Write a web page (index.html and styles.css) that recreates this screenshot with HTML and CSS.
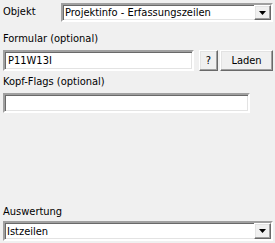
FILE: index.html
```html
<!DOCTYPE html>
<html lang="de">
<head>
  <meta charset="UTF-8" />
  <title>Auswertung</title>
  <link rel="stylesheet" href="styles.css">
</head>
<body>
  <div class="panel">
    <!-- Objekt -->
    <div class="row">
      <span class="row-label">Objekt</span>
      <div class="combo combo-top">
        <span class="combo-text">Projektinfo - Erfassungszeilen</span>
        <div class="combo-btn">
          <svg width="7" height="4" viewBox="0 0 7 4"><path d="M0 0H7L3.5 4Z" fill="#000"/></svg>
        </div>
      </div>
    </div>

    <!-- Formular -->
    <div class="label label-formular">Formular (optional)</div>
    <div class="row row-formular">
      <div class="field field-formular">P11W13I</div>
      <div class="button button-help">?</div>
      <div class="button button-laden">Laden</div>
    </div>

    <!-- Kopf-Flags -->
    <div class="label label-flags">Kopf-Flags (optional)</div>
    <div class="field field-flags"></div>

    <div class="spacer"></div>

    <!-- Auswertung -->
    <div class="label">Auswertung</div>
    <div class="combo combo-bottom">
      <span class="combo-text">Istzeilen</span>
      <div class="combo-btn">
        <svg width="7" height="4" viewBox="0 0 7 4"><path d="M0 0H7L3.5 4Z" fill="#000"/></svg>
      </div>
    </div>
  </div>
</body>
</html>
```

FILE: styles.css
```css
html, body {
  margin: 0;
  height: 100%;
  background: #f0f0f0;
  font-family: "DejaVu Sans Condensed", "DejaVu Sans", sans-serif;
  font-stretch: condensed;
  font-size: 11px;
  color: #000;
}

.panel {
  box-sizing: border-box;
  height: 100%;
  padding: 3px 2px 2px 3px;
  display: flex;
  flex-direction: column;
}

.row {
  display: flex;
  align-items: center;
}

.row-label {
  width: 58px;
  padding-bottom: 3px;
}

.label {
  line-height: 14px;
}

.label-formular {
  margin-top: 10px;
}

.label-flags {
  margin-top: 4px;
}

.row-formular {
  margin-top: 4px;
}

/* sunken 3d field */
.field,
.combo {
  box-sizing: border-box;
  background: #fff;
  border: 2px solid;
  border-color: #a0a0a0 #fff #fff #a0a0a0;
  box-shadow: inset 1px 1px 0 #696969, inset -1px -1px 0 #e3e3e3;
}

.field {
  height: 21px;
  line-height: 17px;
  padding-left: 3px;
}

.field-formular {
  width: 191px;
}

.field-flags {
  width: 247px;
  height: 20px;
  margin-top: 4px;
}

/* raised 3d button */
.button,
.combo-btn {
  box-sizing: border-box;
  background: #f0f0f0;
  border: 1px solid;
  border-color: #fff #696969 #696969 #fff;
  box-shadow: inset -1px -1px 0 #a0a0a0, inset 1px 1px 0 #e3e3e3;
  display: flex;
  align-items: center;
  justify-content: center;
}

.button {
  height: 21px;
}

.button-help {
  width: 19px;
  margin-left: 5px;
}

.button-laden {
  width: 53px;
  margin-left: 2px;
}

.combo {
  display: flex;
  align-items: center;
}

.combo-top {
  flex: 1;
  height: 19px;
}

.combo-bottom {
  height: 20px;
  margin-top: 2px;
}

.combo-text {
  flex: 1;
  padding-left: 2px;
  white-space: nowrap;
  overflow: hidden;
}

.combo-btn {
  width: 17px;
  align-self: stretch;
}

.spacer {
  flex: 1;
}
```
